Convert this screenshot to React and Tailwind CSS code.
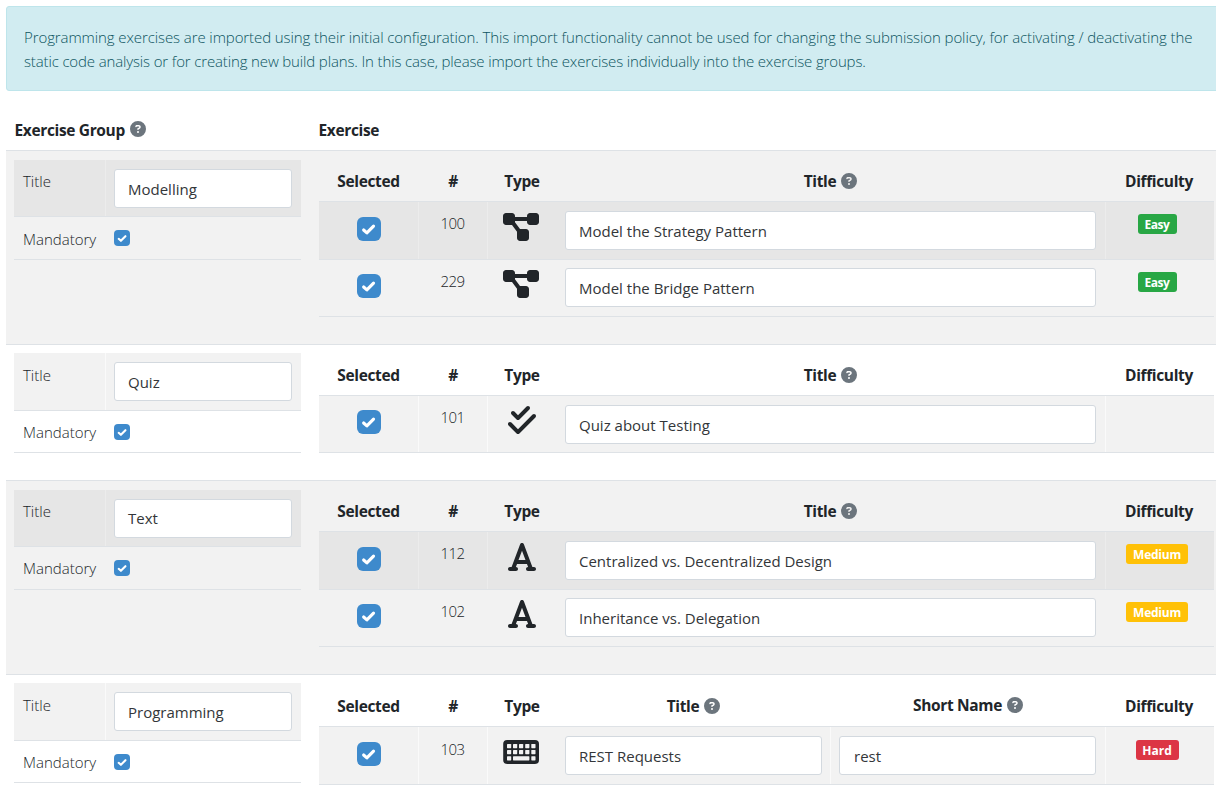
import React from "react";
import {
  FaCheckDouble,
  FaCircleQuestion,
  FaDiagramProject,
  FaFont,
} from "react-icons/fa6";

function Keyboard({ className }) {
  return (
    <svg viewBox="0 0 36 32" className={className}>
      <rect x="0.2" y="4" width="35.8" height="24" rx="4" fill="currentColor" />
      <g fill="#f2f2f2">
        {[8, 14].map((y) =>
          [4, 10, 16, 22.2, 28.3].map((x) => (
            <rect key={`${x}-${y}`} x={x} y={y} width="4.2" height="4.2" rx="0.6" />
          ))
        )}
        <rect x="4" y="20.2" width="4.2" height="4.2" rx="0.6" />
        <rect x="10" y="20.2" width="16.4" height="4.2" rx="0.6" />
        <rect x="28.3" y="20.2" width="4.2" height="4.2" rx="0.6" />
      </g>
    </svg>
  );
}

const groups = [
  {
    title: "Modelling",
    shaded: true,
    height: "h-[194px]",
    left: { pad: "pt-[9px]", row: "h-[57px]", second: "h-[43px]", titlePad: "pt-[10px]", labelPad: "pt-[11px]", field: "" },
    head: "h-[38px]",
    exercises: [
      { id: 100, icon: FaDiagramProject, title: "Model the Strategy Pattern", difficulty: "Easy", height: "h-[58px]", striped: true },
      { id: 229, icon: FaDiagramProject, title: "Model the Bridge Pattern", difficulty: "Easy", height: "h-[57px]", tight: true },
    ],
  },
  {
    title: "Quiz",
    height: "h-[136px]",
    left: { pad: "pt-[8px]", row: "h-[58px]", second: "h-[42px]", titlePad: "pt-[11px]", labelPad: "pt-[10px]", field: "" },
    head: "h-[38px]",
    exercises: [
      { id: 101, icon: FaCheckDouble, narrowIcon: true, title: "Quiz about Testing", height: "h-[57px]", striped: true },
    ],
  },
  {
    title: "Text",
    shaded: true,
    height: "h-[194px]",
    left: { pad: "pt-[9px]", row: "h-[57px]", second: "h-[43px]", titlePad: "pt-[10px]", labelPad: "pt-[10px]", field: "pb-px" },
    head: "h-[38px]",
    exercises: [
      { id: 112, icon: FaFont, narrowIcon: true, title: "Centralized vs. Decentralized Design", difficulty: "Medium", height: "h-[58px]", striped: true },
      { id: 102, icon: FaFont, narrowIcon: true, title: "Inheritance vs. Delegation", difficulty: "Medium", height: "h-[57px]", tight: true },
    ],
  },
  {
    title: "Programming",
    height: "h-[123px]",
    left: { pad: "pt-[8px]", row: "h-[58px]", second: "h-[42px]", titlePad: "pt-[11px]", labelPad: "pt-[10px]", field: "" },
    head: "h-[39px]",
    exercises: [
      { id: 103, icon: Keyboard, title: "REST Requests", shortName: "rest", difficulty: "Hard", height: "h-[58px]", striped: true, roomy: true },
    ],
  },
];

const badgeColors = {
  Easy: "bg-[#28a745] w-[39px] tracking-[-0.5px]",
  Medium: "bg-[#ffc107] w-[62px] tracking-[-0.25px]",
  Hard: "bg-[#dc3545] w-[43px]",
};

function Help() {
  return <FaCircleQuestion className="mb-[2px] size-4 shrink-0 text-[#6c757d]" />;
}

function Check({ large }) {
  return (
    <span
      className={`flex shrink-0 items-center justify-center bg-[#3e8acc] ${
        large ? "size-6 rounded-md" : "size-4 rounded-[4px]"
      }`}
    >
      <svg viewBox="-0.5 0 9 8" className={large ? "h-[13px] w-[15px]" : "h-[9px] w-[10px]"}>
        <path
          fill="none"
          stroke="#fff"
          strokeWidth="1.9"
          strokeLinecap="round"
          strokeLinejoin="round"
          d="M1 4.3 3 6.1 7.1 1.9"
        />
      </svg>
    </span>
  );
}

function Field({ value, className = "" }) {
  return (
    <div
      className={`flex h-[39px] items-center rounded-[3px] border border-[#d3d9df] bg-white px-[13px] pt-px text-[15px] whitespace-nowrap text-[#333639] ${className}`}
    >
      {value}
    </div>
  );
}

function Heading({ children, className = "" }) {
  return (
    <div className={`flex items-center justify-center gap-[5px] text-[15.5px] font-bold tracking-[-0.35px] ${className}`}>
      {children}
    </div>
  );
}

function GroupPanel({ group }) {
  const { left, shaded, title } = group;
  const fill = shaded ? "bg-[#e6e6e6]" : "bg-[#f2f2f2]";
  const line = shaded ? "border-[#ececec]" : "border-[#fafafa]";
  return (
    <div className={`w-[313px] shrink-0 pl-2 ${left.pad}`}>
      <div className={`flex w-[287px] border-b border-[#dee2e6] ${fill} ${left.row}`}>
        <div className={`w-[92px] border-r pl-[9px] text-[15px] font-light ${left.titlePad} ${line}`}>Title</div>
        <Field value={title} className={`mt-[9px] ml-2 w-[178px] ${left.field}`} />
      </div>
      <div className={`flex w-[287px] border-b border-[#dee2e6] ${left.second}`}>
        <div className={`w-[100px] pl-[9px] text-[15px] font-light ${left.labelPad}`}>Mandatory</div>
        <div className="pt-[13px]">
          <Check />
        </div>
      </div>
    </div>
  );
}

function ExerciseRow({ exercise, shaded }) {
  const { icon: Icon, id, title, shortName, difficulty, height, striped, tight, roomy, narrowIcon } = exercise;
  const fill = striped ? (shaded ? "bg-[#e6e6e6]" : "bg-[#f2f2f2]") : "";
  const line = striped ? (shaded ? "border-[#ececec]" : "border-[#fafafa]") : "border-transparent";
  const short = height === "h-[57px]";
  return (
    <div className={`flex border-b border-[#dee2e6] ${height} ${fill}`}>
      <div className={`flex w-[100px] justify-center border-r ${short ? "pt-[14px]" : "pt-[15px]"} ${line}`}>
        <Check large />
      </div>
      <div
        className={`w-[69px] border-r pr-px text-center text-[15px] font-light tracking-[-0.6px] ${
          roomy ? "pt-[11px]" : "pt-[10px]"
        } ${line}`}
      >
        {id}
      </div>
      <div
        className={`flex w-[69px] justify-center border-r border-transparent ${narrowIcon ? "pr-px" : "pr-[2px]"} ${
          short ? "pt-[8px]" : "pt-[9px]"
        }`}
      >
        <Icon className={narrowIcon ? "h-8 w-7" : "h-8 w-9"} />
      </div>
      <div className={`flex w-[549px] border-r pl-2 ${tight ? "pt-[8px]" : "pt-[9px]"} ${line}`}>
        {shortName ? (
          <>
            <Field value={title} className="w-[257px]" />
            <div className={`-mt-[9px] ml-2 w-px border-r ${line}`} />
            <Field value={shortName} className="ml-[8px] w-[257px] pl-[14px]" />
          </>
        ) : (
          <Field value={title} className="w-[531px]" />
        )}
      </div>
      <div className={`flex grow items-start justify-center pr-[6px] ${roomy ? "pt-[13px]" : "pt-3"}`}>
        {difficulty && (
          <span className={`flex h-5 items-center justify-center rounded-[3px] pt-px text-[12px] font-bold text-white ${badgeColors[difficulty]}`}>
            {difficulty}
          </span>
        )}
      </div>
    </div>
  );
}

function Group({ group }) {
  const hasShortName = group.exercises.some((e) => e.shortName);
  return (
    <section className={`flex border-t border-[#dee2e6] ${group.height} ${group.shaded ? "bg-[#f2f2f2]" : ""}`}>
      <GroupPanel group={group} />
      <div className="w-[895px]">
        <div className={`box-content flex border-b border-[#dee2e6] pt-[12px] ${group.head}`}>
          <Heading className="w-[99px]">Selected</Heading>
          <Heading className="w-[70px]">#</Heading>
          <Heading className="w-[68px]">Type</Heading>
          {hasShortName ? (
            <>
              <Heading className="w-[275px]">Title <Help /></Heading>
              <Heading className="w-[274px] pb-[2px]">Short Name <Help /></Heading>
            </>
          ) : (
            <Heading className="w-[549px]">Title <Help /></Heading>
          )}
          <Heading className="w-[109px] pr-px">Difficulty</Heading>
        </div>
        {group.exercises.map((e) => (
          <ExerciseRow key={e.id} exercise={e} shaded={group.shaded} />
        ))}
      </div>
    </section>
  );
}

export default function App() {
  return (
    <main className="h-[797px] w-[1216px] overflow-hidden bg-white pt-[6px] pl-[6px] font-['Open_Sans','Noto_Sans',sans-serif] text-[#212529]">
      <div className="h-[85px] w-[1220px] rounded-[3px] border border-[#bee5eb] bg-[#d1ecf1] pt-[18px] pl-[17px] text-[15px] leading-6 font-light whitespace-nowrap text-[#0c5460]">
        <p className="tracking-[-0.092px]">
          Programming exercises are imported using their initial configuration. This import functionality cannot be used for changing the submission policy, for activating / deactivating the
        </p>
        <p className="tracking-[-0.142px]">
          static code analysis or for creating new build plans. In this case, please import the exercises individually into the exercise groups.
        </p>
      </div>
      <div className="flex h-[59px] items-end pb-[8px] pl-[8.5px]">
        <Heading className="w-[304px] justify-start!">Exercise Group <Help /></Heading>
        <Heading>Exercise</Heading>
      </div>
      {groups.map((g) => (
        <Group key={g.title} group={g} />
      ))}
    </main>
  );
}
